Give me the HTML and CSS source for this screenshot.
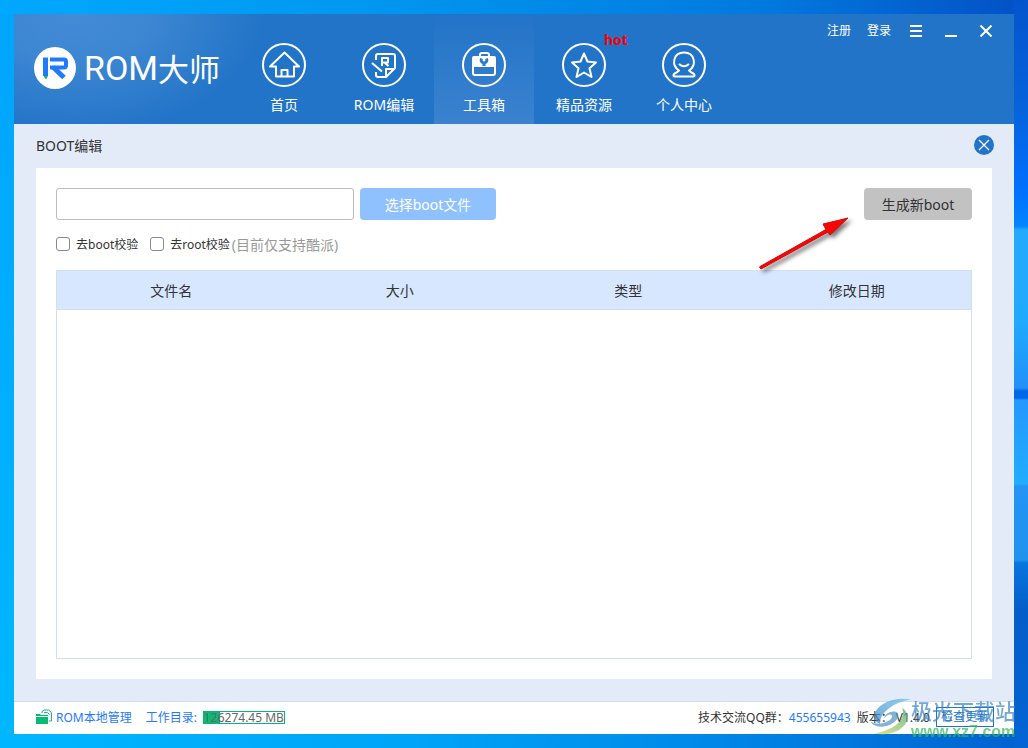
FILE: index.html
```html
<!DOCTYPE html>
<html lang="zh-CN">
<head>
<meta charset="utf-8">
<title>ROM大师</title>
<link rel="stylesheet" href="styles.css">
</head>
<body>
<div class="desktop">
<main class="window">
  <header class="header">
    <div class="brand">
      <svg class="brand-mark" viewBox="0 0 42 42" aria-hidden="true">
        <circle cx="21" cy="21" r="21" fill="#fff"/>
        <path d="M9 10.500h5v18.500h-5z" fill="#1f7aff"/>
        <path d="M9.500 29h4.500l-2 3.500z" fill="#12b866"/>
        <path d="M16 12.500h14q2 0 2 2v4q0 2-2 2H16" fill="none" stroke="#1f7aff" stroke-width="4"/>
        <path d="M19 20l11 10.500" stroke="#1f7aff" stroke-width="5"/>
      </svg>
      <span class="brand-latin">ROM</span><span class="brand-cjk">大师</span>
    </div>
    <nav class="nav">
      <a class="nav-item" href="#home">
        <svg class="nav-icon" viewBox="0 0 44 44" aria-hidden="true"><circle cx="22" cy="22" r="21"/><path d="M14 23.500v10h18v-10h5L22.500 9.500 8 23.500z"/><path d="M19.500 33v-6h6v6"/></svg>
        <span>首页</span>
      </a>
      <a class="nav-item" href="#edit">
        <svg class="nav-icon" viewBox="0 0 44 44" aria-hidden="true"><circle cx="22" cy="22" r="21"/><path d="M14 17v-4q0-2 2-2h15q2 0 2 2v12l-9 9h-8q-2 0-2-2v-3"/><path d="M24 34v-8h9M10 20l10 8.500"/><path d="M20 23v-8h6v4.500h-5M23 20l3.500 3"/></svg>
        <span>ROM编辑</span>
      </a>
      <a class="nav-item nav-item-active" href="#tools" aria-current="page">
        <svg class="nav-icon" viewBox="0 0 44 44" aria-hidden="true"><circle cx="22" cy="22" r="21"/><path d="M18 14v-2q0-2 2-2h5q2 0 2 2v2"/><path class="solid" d="M12 13h20q2 0 2 2v9H10v-9q0-2 2-2z"/><path d="M11 23v7q0 2 2 2h18q2 0 2-2v-7"/><path class="tool" d="M19.500 15.500q-1.500 3.500 2.500 4.500q4-1 2.500-4.500M22 19v4"/></svg>
        <span>工具箱</span>
      </a>
      <a class="nav-item" href="#resources">
        <svg class="nav-icon" viewBox="0 0 44 44" aria-hidden="true"><circle cx="22" cy="22" r="21"/><path d="M22 10.500l3.500 8 8.500 1-6.500 5.700 2 8.800-7.500-4.500-7.500 4.500 2-8.800L10 19.500l8.500-1z"/></svg>
        <span>精品资源</span>
        <strong class="hot">hot</strong>
      </a>
      <a class="nav-item" href="#me">
        <svg class="nav-icon" viewBox="0 0 44 44" aria-hidden="true"><circle cx="22" cy="22" r="21"/><path d="M17 27.500c-8-5-6-18 5-18s13 13 5 18q2 2 5 3.500 1.500 2.500-1 2.500H13q-2.500 0-1-2.500 3-1.500 5-3.500z"/><path d="M17 21q5 4.500 10 0"/></svg>
        <span>个人中心</span>
      </a>
    </nav>
    <div class="controls">
      <a class="account" href="#register">注册</a>
      <a class="account" href="#login">登录</a>
      <button class="control" type="button" aria-label="菜单"><svg viewBox="0 0 12 12"><path d="M0 1h12M0 6h12M0 11h12"/></svg></button>
      <button class="control" type="button" aria-label="最小化"><svg viewBox="0 0 12 12"><path d="M0 11h12"/></svg></button>
      <button class="control" type="button" aria-label="关闭"><svg viewBox="0 0 12 12"><path d="M0.500 0.500l11 11M11.500 0.500l-11 11"/></svg></button>
    </div>
  </header>

  <section class="content">
    <div class="title-row">
      <h1 class="title">BOOT编辑</h1>
      <button class="close-panel" type="button" aria-label="关闭面板"><svg viewBox="0 0 20 20"><circle cx="10" cy="10" r="10" fill="#2274c8"/><path d="M5 5l10 10M15 5L5 15" stroke="#fff" stroke-width="1.300"/></svg></button>
    </div>
    <div class="panel">
      <div class="file-row">
        <input class="path" type="text" aria-label="boot文件路径">
        <button class="btn btn-choose" type="button">选择boot文件</button>
        <button class="btn btn-build" type="button">生成新boot</button>
      </div>
      <div class="options">
        <label class="option"><input type="checkbox">去boot校验</label>
        <label class="option"><input type="checkbox">去root校验</label>
        <span class="note">(目前仅支持酷派)</span>
      </div>
      <div class="table-box">
        <table class="files">
          <thead><tr><th>文件名</th><th>大小</th><th>类型</th><th>修改日期</th></tr></thead>
        </table>
      </div>
      <svg class="arrow" viewBox="0 0 100 64" aria-hidden="true">
        <path d="M7 50.500L73 13.500 70 8 95 2 77 19 75 16 8 53q-2-1-1-2.500z" fill="#fa0505" stroke="#d00a0a" stroke-width="1"/>
      </svg>
    </div>
  </section>

  <footer class="footer">
    <a class="local" href="#local">
      <svg class="folder" viewBox="0 0 16 16" aria-hidden="true"><path d="M6 4V2.500L8 1h4.500l3 2.500V12H13" fill="#fff" stroke="#12b981"/><path d="M8 3.500h3.500l2 2" fill="none" stroke="#12b981"/><path d="M0 5h4l1 1h7v9H0z" fill="#08bb75"/><path d="M0 7.500h12" stroke="#fff"/></svg>
      ROM本地管理
    </a>
    <a class="directory" href="#directory">工作目录:</a>
    <span class="disk">126274.45 MB</span>
    <div class="about">
      <span class="group">技术交流QQ群：</span><a class="qq" href="#qq">455655943</a>
      <span class="version">版本： V1.4.0</span>
      <button class="update" type="button">检查更新</button>
    </div>
  </footer>
</main>
<div class="watermark">
  <svg class="swirl" viewBox="0 0 50 42" aria-hidden="true">
    <defs><linearGradient id="sky" x1="0" y1="1" x2="1" y2="0"><stop stop-color="#3380c0"/><stop offset="1" stop-color="#69c3ed"/></linearGradient><linearGradient id="leaf" x1="0" y1="1" x2="1" y2="0"><stop stop-color="#d3da51"/><stop offset="1" stop-color="#48a578"/></linearGradient></defs>
    <path d="M46 2C23-2 6 10 6 20q0 6 6 9-1-9 9-17Q31 4 46 2z" fill="url(#sky)"/>
    <path d="M2 26c2 7 18 8 27-1 5-5 3-11-3-10q-8 1-10 8c4-5 8-6 9-3 1 5-14 12-23 6z" fill="#4d94c2"/>
    <path d="M36 11c4 12-5 23-30 28 17 3 34-4 36-17q0-7-6-11z" fill="url(#leaf)"/>
  </svg>
  <div class="mark-text"><span class="mark-name">极光下载站</span><span class="mark-url">www.xz7.com</span></div>
</div>
</div>
</body>
</html>
```
FILE: styles.css
```css
* { box-sizing: border-box; }
body {
  margin: 0;
  font-family: "Noto Sans", "Noto Sans CJK SC", sans-serif;
  font-size: 14px;
  color: #333;
}
a { color: inherit; text-decoration: none; }
button { font: inherit; color: inherit; border: 0; padding: 0; background: none; cursor: pointer; }
svg { display: block; }
.desktop {
  position: relative;
  display: flex;
  min-height: 100vh;
  padding: 14px;
  overflow: hidden;
  background:
    linear-gradient(180deg, #0554cd 0, #0563dc 110px, #0070ff 190px, #0086ff 226px, #22aaff 230px, #20aaff 320px, #2290f8 388px, #0068e8 391px, #0068e8 398px, #2498ff 400px, #20adff 484px, #2494f5 486px, #2292ef 560px, #0875df 563px, #045ec9 610px, #0464d4 100%) right / 14px 100% no-repeat,
    linear-gradient(90deg, #00a8ff 0, #0098f0 35%, #0079df 75%, #0450c5 100%) top / 100% 14px no-repeat,
    linear-gradient(90deg, #00b7ff 0, #00a4f8 40%, #0087e7 70%, #0460d0 100%) bottom / 100% 14px no-repeat,
    linear-gradient(180deg, #00a5fc, #00b7ff);
}
.window { flex: 1; display: flex; flex-direction: column; min-width: 0; background: #e3ebf8; }

.header {
  position: relative;
  display: flex;
  height: 110px;
  padding-left: 20px;
  color: #fff;
  background: radial-gradient(ellipse 190px 120px at 60px 0, #438bd5 0, #3d86d2 40%, #2274c8 100%), #2274c8;
}
.brand { display: flex; align-items: center; width: 200px; padding-bottom: 2px; }
.brand-mark { width: 42px; height: 42px; margin-right: 8px; }
.brand-latin { font: 400 34px/40px Roboto, sans-serif; }
.brand-cjk { font: 400 31px/40px "Noto Sans CJK SC", sans-serif; }
.nav { display: flex; }
.nav-item {
  position: relative;
  display: flex;
  flex-direction: column;
  align-items: center;
  width: 100px;
  padding-top: 29px;
  gap: 8px;
  line-height: 20px;
}
.nav-item-active { background: linear-gradient(180deg, #2274c8, #3b82cf); }
.nav-icon { width: 44px; height: 44px; fill: none; stroke: #fff; stroke-width: 2; stroke-linejoin: round; }
.nav-icon .solid { fill: #fff; stroke: none; }
.nav-icon .tool { stroke: #2d7acb; stroke-width: 3; }
.hot { position: absolute; top: 16px; left: 70px; color: #f00; }
.controls { position: absolute; top: 8px; right: 22px; display: flex; align-items: center; font-size: 12px; line-height: 18px; }
.account { margin-right: 16px; }
.control { width: 12px; height: 12px; margin-left: 23px; }
.account + .control { margin-left: 3px; }
.control svg { width: 12px; height: 12px; stroke: #fff; stroke-width: 2; }

.content { flex: 1; display: flex; flex-direction: column; padding: 0 22px 22px; }
.title-row { display: flex; align-items: center; justify-content: space-between; height: 44px; padding-bottom: 2px; }
.title { margin: 0; font-size: 14px; font-weight: 400; }
.close-panel { width: 20px; height: 20px; margin-right: -2px; }
.panel { position: relative; flex: 1; display: flex; flex-direction: column; padding: 20px; background: #fff; }
.file-row { display: flex; gap: 6px; }
.path { width: 298px; height: 32px; border: 1px solid #bbb; border-radius: 3px; background: #fff; font: inherit; }
.btn { height: 32px; border-radius: 4px; }
.btn-choose { width: 136px; color: #fff; background: #8fc1ff; }
.btn-build { width: 108px; margin-left: auto; background: #c2c2c2; }
.options { display: flex; align-items: center; height: 50px; padding-bottom: 2px; font-size: 12px; }
.option { display: flex; align-items: center; gap: 6px; }
.option + .option { margin-left: 12px; }
.option input {
  appearance: none;
  width: 14px;
  height: 14px;
  margin: 0;
  border: 1px solid #8a8a8a;
  border-radius: 3px;
  background: #fff;
}
.option input:checked { background: #2274c8; }
.note { margin-left: 2px; font-size: 14px; color: #999; }
.table-box { flex: 1; border: 1px solid #d5dfec; }
.files { width: 100%; border-collapse: collapse; table-layout: fixed; }
.files th { height: 38px; padding: 0; font-weight: 400; background: #d7e7ff; border-bottom: 1px solid #d5dfec; }
.arrow { position: absolute; top: 48px; right: 139px; width: 100px; height: 64px; filter: drop-shadow(3px 3px 2px #0008); }

.footer {
  display: flex;
  align-items: center;
  height: 33px;
  padding: 0 20px 2px 22px;
  border-top: 1px solid #d3dcea;
  background: #fff;
  font-size: 12px;
}
.local { display: flex; align-items: center; gap: 4px; color: #1f7aff; }
.folder { width: 16px; height: 16px; }
.directory { margin-left: 14px; color: #1f7aff; }
.disk {
  min-width: 81px;
  height: 13px;
  margin-left: 6px;
  border: 1px solid #08b574;
  background: linear-gradient(90deg, #08bb75 16px, #fff 16px);
  line-height: 11px;
  white-space: nowrap;
  color: #666;
}
.about { display: flex; align-items: center; margin-left: auto; }
.qq { color: #1f7aff; margin-right: 6px; }
.update { width: 58px; height: 20px; margin-left: 6px; border: 1px solid #2274c8; color: #2274c8; line-height: 18px; }

.watermark { position: absolute; right: 12px; bottom: 8px; display: flex; height: 44px; opacity: .7; pointer-events: none; }
.swirl { flex: none; width: 46px; height: 42px; margin-right: -4px; }
.mark-text { display: flex; flex-direction: column; white-space: nowrap; }
.mark-name { font: 500 21px/28px "Noto Sans CJK SC", sans-serif; color: #3684c6; }
.mark-url { font: 700 16px/16px "Liberation Sans", sans-serif; color: #37b85b; }
```
